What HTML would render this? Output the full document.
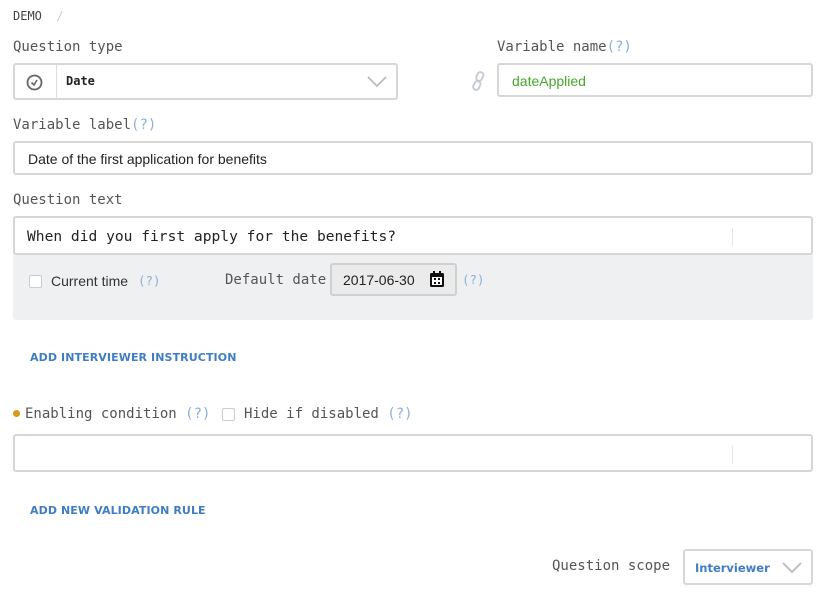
<!DOCTYPE html><html><head><style>
body{margin:0;width:824px;height:609px;background:#fff;position:relative;font-family:"Liberation Sans",sans-serif;overflow:hidden}
.a{position:absolute}
.m{font-family:"DejaVu Sans Mono",monospace;font-size:14px;color:#555}
.box{position:absolute;border:2px solid #d6d6d6;border-radius:3px;background:#fff;box-sizing:border-box}
.q{color:#8ab0d8}
.lnk{font-family:"DejaVu Sans",sans-serif;font-weight:bold;font-size:11px;color:#3f7dc4;letter-spacing:.1px}
.cb{position:absolute;width:11px;height:11px;border:1.5px solid #c8cdd2;border-radius:2px;background:#fff}
</style></head><body>
<div class="a m" style="left:13px;top:9px;font-size:12px;color:#444">DEMO <span style="color:#bcd">&nbsp;/</span></div>
<div class="a m" style="left:13px;top:39px">Question type</div>
<div class="box" style="left:13px;top:63px;width:385px;height:37px">
 <svg class="a" style="left:11px;top:9px" width="17" height="17" viewBox="0 0 17 17"><circle cx="8.5" cy="8.5" r="7" fill="none" stroke="#666" stroke-width="1.8"/><path d="M5.5 8.5l2.5 2.5 3-5" fill="none" stroke="#666" stroke-width="1.6"/></svg>
 <div class="a" style="left:41px;top:0;width:1px;height:33px;background:#ddd"></div>
 <div class="a m" style="left:51px;top:9px;font-size:12px;font-weight:bold;color:#222">Date</div>
 <svg class="a" style="left:352px;top:11px" width="20" height="12"><path d="M1 1l9 9 9-9" fill="none" stroke="#bbb" stroke-width="1.8"/></svg>
</div>
<div class="a m" style="left:497px;top:39px">Variable name<span class="q">(?)</span></div>
<svg class="a" style="left:471px;top:70px" width="16" height="22" viewBox="0 0 16 22"><g fill="none" stroke="#c5cdd5" stroke-width="2"><rect x="6" y="2" width="6" height="9" rx="3" transform="rotate(25 9 6)"/><rect x="3" y="11" width="6" height="9" rx="3" transform="rotate(25 6 15)"/></g></svg>
<div class="box" style="left:497px;top:63px;width:316px;height:34px"><div class="a" style="left:13px;top:8px;font-size:14px;color:#44a82a">dateApplied</div></div>
<div class="a m" style="left:13px;top:117px">Variable label<span class="q">(?)</span></div>
<div class="box" style="left:13px;top:141px;width:800px;height:34px"><div class="a" style="left:13px;top:8px;font-size:14px;color:#222">Date of the first application for benefits</div></div>
<div class="a m" style="left:13px;top:192px">Question text</div>
<div class="a" style="left:13px;top:216px;width:800px;height:104px;background:#eff0f2;border-radius:3px"></div>
<div class="box" style="left:13px;top:216px;width:800px;height:39px"><div class="a m" style="left:12px;top:10px;font-size:14.6px;color:#222">When did you first apply for the benefits?</div><div class="a" style="left:717px;top:10px;width:1px;height:18px;background:#e5e5e5"></div></div>
<div class="cb" style="left:29px;top:275px"></div>
<div class="a" style="left:51px;top:273px;font-size:14px;color:#333">Current time</div>
<div class="a m" style="left:138px;top:273px;font-size:12.5px"><span class="q">(?)</span></div>
<div class="a m" style="left:225px;top:272px">Default date</div>
<div class="a" style="left:330px;top:263px;width:127px;height:33px;box-sizing:border-box;border:2px solid #d0d0d0;border-radius:3px;background:#ebebeb"><div class="a" style="left:11px;top:7px;font-size:14px;color:#222">2017-06-30</div>
<svg class="a" style="left:97px;top:6px" width="16" height="17" viewBox="0 0 16 17"><rect x="1" y="2" width="14" height="14" rx="1.5" fill="#111"/><rect x="3" y="6" width="10" height="8" fill="#fff"/><g fill="#111"><rect x="5" y="7" width="2" height="2"/><rect x="9" y="7" width="2" height="2"/><rect x="5" y="11" width="2" height="2"/><rect x="9" y="11" width="2" height="2"/></g><rect x="4" y="0" width="2" height="4" fill="#111"/><rect x="10" y="0" width="2" height="4" fill="#111"/></svg></div>
<div class="a m" style="left:462px;top:272px;font-size:12.5px"><span class="q">(?)</span></div>
<div class="a lnk" style="left:30px;top:351px">ADD INTERVIEWER INSTRUCTION</div>
<div class="a" style="left:13px;top:410px;width:7px;height:7px;border-radius:50%;background:#d79a12"></div>
<div class="a m" style="left:25px;top:406px">Enabling condition <span class="q">(?)</span></div>
<div class="cb" style="left:222px;top:408px"></div>
<div class="a m" style="left:244px;top:406px">Hide if disabled <span class="q">(?)</span></div>
<div class="box" style="left:13px;top:434px;width:800px;height:38px"><div class="a" style="left:717px;top:10px;width:1px;height:18px;background:#e5e5e5"></div></div>
<div class="a lnk" style="left:30px;top:504px">ADD NEW VALIDATION RULE</div>
<div class="a m" style="left:552px;top:558px">Question scope</div>
<div class="box" style="left:683px;top:549px;width:130px;height:36px"><div class="a" style="left:10px;top:10px;font-family:'DejaVu Sans',sans-serif;font-weight:bold;font-size:11.5px;color:#3f7dc4">Interviewer</div><svg class="a" style="left:97px;top:11px" width="20" height="12"><path d="M1 1l9 9 9-9" fill="none" stroke="#bbb" stroke-width="1.8"/></svg></div>
</body></html>
